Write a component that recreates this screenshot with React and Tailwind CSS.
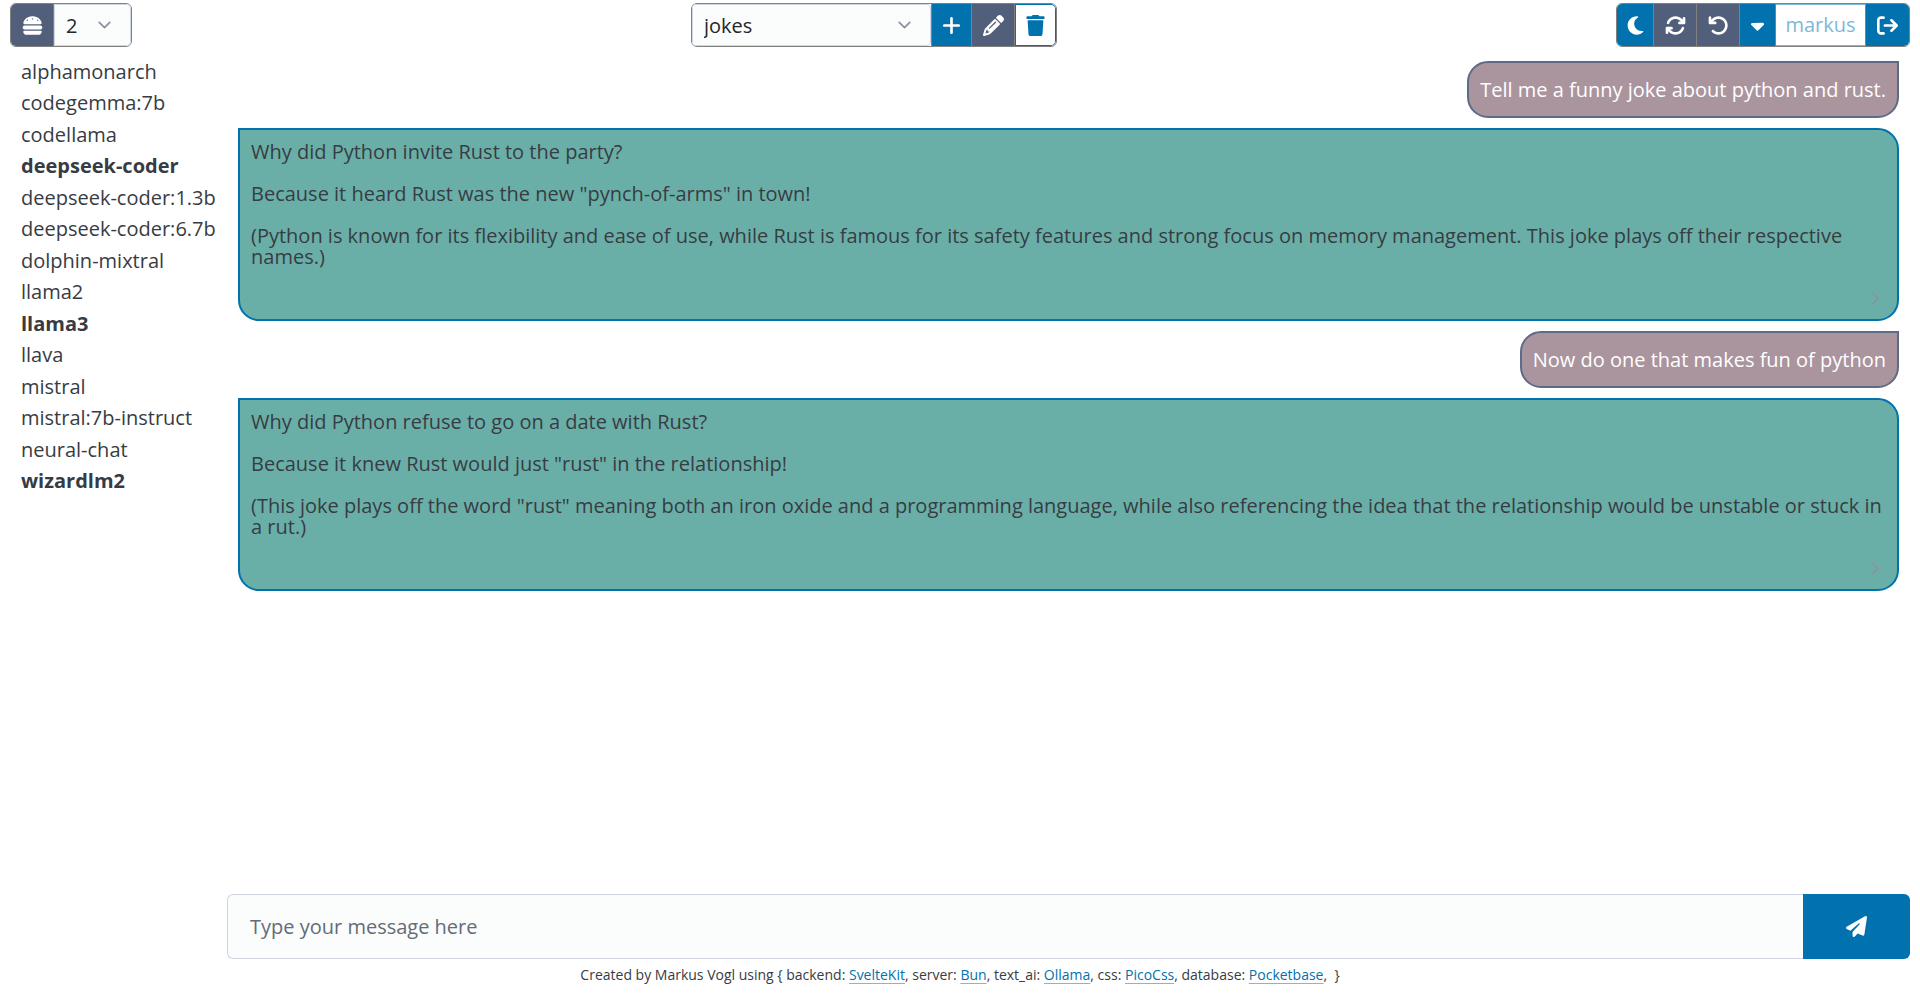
import {
  FaArrowRightFromBracket,
  FaArrowRotateLeft,
  FaArrowsRotate,
  FaBurger,
  FaCaretDown,
  FaMoon,
  FaPaperPlane,
  FaPencil,
  FaPlus,
  FaTrash,
} from 'react-icons/fa6';
import { FiChevronDown, FiChevronRight } from 'react-icons/fi';

const models = [
  { name: 'alphamonarch' },
  { name: 'codegemma:7b' },
  { name: 'codellama' },
  { name: 'deepseek-coder', active: true },
  { name: 'deepseek-coder:1.3b' },
  { name: 'deepseek-coder:6.7b' },
  { name: 'dolphin-mixtral' },
  { name: 'llama2' },
  { name: 'llama3', active: true },
  { name: 'llava' },
  { name: 'mistral' },
  { name: 'mistral:7b-instruct' },
  { name: 'neural-chat' },
  { name: 'wizardlm2', active: true },
];

const messages = [
  { role: 'user', text: ['Tell me a funny joke about python and rust.'] },
  {
    role: 'assistant',
    text: [
      'Why did Python invite Rust to the party?',
      'Because it heard Rust was the new "pynch-of-arms" in town!',
      '(Python is known for its flexibility and ease of use, while Rust is famous for its safety features and strong focus on memory management. This joke plays off their respective names.)',
    ],
  },
  { role: 'user', text: ['Now do one that makes fun of python'] },
  {
    role: 'assistant',
    text: [
      'Why did Python refuse to go on a date with Rust?',
      'Because it knew Rust would just "rust" in the relationship!',
      '(This joke plays off the word "rust" meaning both an iron oxide and a programming language, while also referencing the idea that the relationship would be unstable or stuck in a rut.)',
    ],
  },
];

const credits = [
  ['backend', 'SvelteKit', 'https://kit.svelte.dev'],
  ['server', 'Bun', 'https://bun.sh'],
  ['text_ai', 'Ollama', 'https://ollama.com'],
  ['css', 'PicoCss', 'https://picocss.com'],
  ['database', 'Pocketbase', 'https://pocketbase.io'],
];

function Group({ children }) {
  return (
    <div className="flex h-11 overflow-hidden rounded-md border border-[#808080] divide-x divide-[#808080]">
      {children}
    </div>
  );
}

function IconButton({ label, className, children }) {
  return (
    <button type="button" aria-label={label} className={`flex items-center justify-center pt-px ${className}`}>
      {children}
    </button>
  );
}

function Select({ label, value, className }) {
  return (
    <div className={`relative bg-[#fbfcfc] ${className}`}>
      <select
        aria-label={label}
        defaultValue={value}
        className="h-full w-full appearance-none rounded-r-sm border border-[#cfd5e2] pl-[11px] pt-px text-[#23262c] outline-none"
      >
        <option>{value}</option>
      </select>
      <FiChevronDown className="pointer-events-none absolute right-4 top-1/2 size-[21px] -translate-y-1/2 text-[#8891a4]" />
    </div>
  );
}

function Message({ role, text }) {
  if (role === 'user') {
    return (
      <div className="self-end rounded-[21px] rounded-tr-none border-2 border-[#5d6b89] bg-[#aa949e] px-[11px] py-4 leading-[21px] text-white">
        {text[0]}
      </div>
    );
  }
  return (
    <div className="flex flex-col gap-[21px] rounded-[21px] rounded-tl-none border-2 border-[#0172ad] bg-[#6aafa7] px-[11px] pb-[10px] pt-[11px] leading-[21px]">
      {text.map((p) => (
        <p key={p}>{p}</p>
      ))}
      <button type="button" aria-label="Show details" className="self-end text-[#8f8fa3]">
        <FiChevronRight className="size-[21px]" />
      </button>
    </div>
  );
}

export default function App() {
  return (
    <div className="flex h-screen flex-col bg-white px-[10px] pt-[3px] font-['Open_Sans','Noto_Sans',sans-serif] text-[20px] text-[#373c44]">
      <header className="flex items-center justify-between">
        <Group>
          <IconButton label="Models" className="w-[43px] bg-[#525f7a] text-white">
            <FaBurger className="size-[21px]" />
          </IconButton>
          <Select label="Number of models" value="2" className="w-[77px]" />
        </Group>

        <Group>
          <Select label="Chat" value="jokes" className="w-[240px]" />
          <IconButton label="New chat" className="w-10 bg-[#0172ad] text-white">
            <FaPlus className="size-[21px]" />
          </IconButton>
          <IconButton label="Rename chat" className="w-[43px] bg-[#525f7a] text-white">
            <FaPencil className="size-[21px]" />
          </IconButton>
          <IconButton
            label="Delete chat"
            className="w-[41px] rounded-r-[5px] bg-white text-[#0172ad] ring-1 ring-inset ring-[#0172ad]"
          >
            <FaTrash className="size-[21px]" />
          </IconButton>
        </Group>

        <Group>
          <IconButton label="Dark mode" className="w-[37px] bg-[#0172ad] text-white">
            <FaMoon className="size-[21px]" />
          </IconButton>
          <IconButton label="Refresh" className="w-[43px] bg-[#525f7a] text-white">
            <FaArrowsRotate className="size-[21px]" />
          </IconButton>
          <IconButton label="Undo" className="w-[43px] bg-[#525f7a] text-white">
            <FaArrowRotateLeft className="size-[21px]" />
          </IconButton>
          <IconButton label="More" className="w-[36px] bg-[#0172ad] text-white">
            <FaCaretDown className="size-[21px]" />
          </IconButton>
          <button type="button" disabled className="w-[90px] border-y border-y-[#80b8d6] bg-white text-[#80b8d6]">
            markus
          </button>
          <IconButton label="Log out" className="w-[43px] bg-[#0172ad] text-white">
            <FaArrowRightFromBracket className="size-[21px]" />
          </IconButton>
        </Group>
      </header>

      <div className="flex min-h-0 flex-1">
        <aside className="w-[217px] shrink-0 pl-[11px] pt-[9px]">
          <ul className="grid h-[441px] auto-rows-fr items-center whitespace-nowrap">
            {models.map(({ name, active }) => (
              <li key={name} className={active ? 'font-bold' : ''}>
                {name}
              </li>
            ))}
          </ul>
        </aside>

        <main className="flex min-w-0 flex-1 flex-col">
          <section className="flex min-h-0 flex-1 flex-col gap-[10px] overflow-y-auto px-[11px] pt-[14px]">
            {messages.map((m) => (
              <Message key={m.text[0]} {...m} />
            ))}
          </section>
          <form className="flex h-[65px] shrink-0" onSubmit={(e) => e.preventDefault()}>
            <input
              type="text"
              aria-label="Message"
              placeholder="Type your message here"
              className="min-w-0 flex-1 rounded-l-md border border-r-0 border-[#cfd5e2] bg-[#fbfcfc] px-[22px] pt-px outline-none placeholder:text-[#646b79]"
            />
            <button
              type="submit"
              aria-label="Send"
              className="flex w-[107px] items-center justify-center rounded-r-md bg-[#0172ad] text-white"
            >
              <FaPaperPlane className="size-[21px]" />
            </button>
          </form>
        </main>
      </div>

      <footer className="h-[35px] shrink-0 pt-[5px] text-center text-[14px] leading-[22px]">
        Created by Markus Vogl using {'{ '}
        {credits.map(([part, name, href]) => (
          <span key={name}>
            {part}:{' '}
            <a href={href} className="text-[#0172ad] underline decoration-[#80b8d6] underline-offset-3">
              {name}
            </a>
            ,{' '}
          </span>
        ))}
        &nbsp;{'}'}
      </footer>
    </div>
  );
}
